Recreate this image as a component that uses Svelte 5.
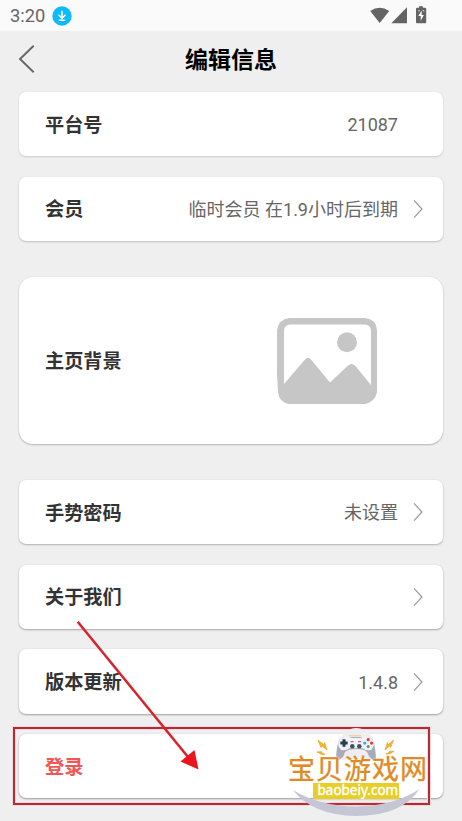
<script>
  const groups = [
    [
      { label: '平台号', value: '21087', depth: 0.14 },
      { label: '会员', value: '临时会员 在1.9小时后到期', arrow: true, depth: 0.19 },
    ],
    [{ label: '主页背景', picture: true, depth: 0.24 }],
    [
      { label: '手势密码', value: '未设置', arrow: true, depth: 0.26 },
      { label: '关于我们', arrow: true, depth: 0.3 },
      { label: '版本更新', value: '1.4.8', arrow: true, depth: 0.33 },
      { label: '登录', accent: true, depth: 0.36 },
    ],
  ];
</script>

<div class="screen">
  <div class="status">
    <span class="time">3:20</span>
    <svg class="download" width="20" height="20" viewBox="0 0 20 20">
      <circle cx="10" cy="10" r="9.7" fill="#0bbaff" />
      <path d="M10 4.700v7.500M6.600 8.800l3.400 3.600 3.400-3.600M6.700 14.200h6.600" fill="none" stroke="#fff" stroke-width="1.500" />
    </svg>
    <svg class="signals" width="58" height="20" viewBox="0 0 58 20" fill="#646464">
      <path d="M0.200 4.900Q9.800 -1.600 19.200 4.900L9.700 17Z" />
      <path d="M37 1.300V17.300H21.300Z" />
      <path d="M49 0.300h4v1.500h2.200q1 0 1 1V16.300q0 1-1 1h-8.200q-1 0-1-1V2.800q0-1 1-1h2z" />
      <path d="M51.700 4.500l-3.400 5.500h2.400v4.700l3.200-5.800h-2.200zM47.700 5.200l1.300-1h1l-.8 1zM54.700 5.200l-1.300-1h-1l.8 1z" fill="#fff" />
    </svg>
  </div>

  <header>
    <svg class="back" width="18" height="30" viewBox="0 0 18 30">
      <path d="M15.700 1.700L2 15L15.700 28.300" fill="none" stroke="#666" stroke-width="1.900" />
    </svg>
    <h1>编辑信息</h1>
  </header>

  <main>
    {#each groups as group}
      <section>
        {#each group as item}
          <div class="card" class:tall={item.picture} style="--depth: {item.depth}">
            <span class="label" class:accent={item.accent}>{item.label}</span>
            {#if item.value}<span class="value">{item.value}</span>{/if}
            {#if item.picture}
              <svg class="picture" width="100" height="86" viewBox="0 0 100 86">
                <path
                  fill="#c6c6c6"
                  fill-rule="evenodd"
                  d="M12 0H88Q99 1 100 12V74Q98 84 88 86H12Q2 84 1 74L0 56V12Q2 1 12 0ZM13 6.500Q7 7 7 13V66L28 41.500Q31 38 34 41.500L53 64.500L71 47.500Q74.500 44.500 78 47.500L94 67V13Q94 7 88 6.500Z"
                />
                <circle cx="70" cy="24.300" r="10" fill="#c6c6c6" />
              </svg>
            {/if}
            {#if item.arrow}
              <svg class="arrow" width="10" height="20" viewBox="0 0 10 20">
                <path d="M1 1.300L9 10L1 18.700" fill="none" stroke="#999" stroke-width="1.200" />
              </svg>
            {/if}
          </div>
        {/each}
      </section>
    {/each}
  </main>

  <svg class="marks" width="462" height="221" viewBox="0 600 462 221">
    <rect x="14" y="728" width="415" height="76" fill="none" stroke="#f5d9dc" stroke-width="4" />
    <rect x="14" y="728" width="415" height="76" fill="none" stroke="#b42b34" stroke-width="2" />
    <path d="M77.700 621.800L188 757" stroke="#d9212a" stroke-width="2.500" />
    <path d="M198.500 769.500L180.500 761.500L194.500 750Z" fill="#ec151c" />
  </svg>

  <div class="watermark">
    <svg width="150" height="101" viewBox="280 720 150 101">
      <path d="M342 736Q348 728 356 728Q365 728 371 736V760H342Z" fill="#eeeef0" />
      <path d="M293 790Q319 806 356 806.500Q394 806 419.500 789Q402 816 356 816Q312 815 293 790Z" fill="#c5c6d4" />
      <path d="M349 735.800h12" stroke="#f0c98a" stroke-width="1" />
      <path d="M339 740Q336 749 336 761Q343 760 345 752Q348 749 356 749Q365 749 367 752Q370 760 376 761Q376 749 373 740Q371 737 366 737H346Q341 737 339 740Z" fill="#a7aab8" />
      <path d="M340 739Q345 735 352 738H360Q367 735 372 739Q376 745 371 750Q366 751 362 748H350Q346 751 341 750Q336 745 340 739Z" fill="#f3f3f7" />
      <path d="M344 739.300v7.400M340.300 743h7.400" stroke="#293d50" stroke-width="3" />
      <circle cx="352.300" cy="746.200" r="2.300" fill="#405365" />
      <circle cx="359.300" cy="746.200" r="2.300" fill="#405365" />
      <path d="M350.500 741.700h3M358 741.700h3" stroke="#db5868" stroke-width="1.200" />
      <circle cx="368.200" cy="739.700" r="1.600" fill="#e73b46" />
      <circle cx="368.200" cy="746.500" r="1.600" fill="#47a85b" />
      <circle cx="364.800" cy="743.100" r="1.600" fill="#31afe2" />
      <circle cx="371.600" cy="743.100" r="1.600" fill="#e73b46" />
      <path d="M318 740l6 5 .5-2.500L327 750l-5.500-4.500-.5 2zM317 752l4.500-.3 .5 1.300 3 1.500-4.500-.3-.5-1zM393.500 740l-5.500 5-.5-2.500L385 750l5-4.500 .5 2zM394 751.500l-4.500-.3-.5 1.300-3 1.500 4.500-.3 .5-1z" fill="#f1b928" stroke="#e9a428" stroke-width=".8" />
      <rect x="313" y="783" width="86" height="16" fill="#e8ce27" />
    </svg>
    <span class="brand">宝贝游戏网</span>
    <span class="domain">baobeiy.com</span>
  </div>
</div>

<style>
  :global(body) {
    margin: 0;
  }
  .screen {
    position: relative;
    width: 462px;
    height: 821px;
    overflow: hidden;
    background: #efefef;
    font-family: Roboto, 'Noto Sans CJK SC', sans-serif;
  }
  .status {
    display: flex;
    align-items: center;
    height: 31px;
    padding: 0 34px 0 10px;
    box-sizing: border-box;
    background: #fafafa;
  }
  .time {
    width: 35px;
    font-size: 18.300px;
    line-height: 31px;
    color: #666;
    white-space: nowrap;
  }
  .download {
    margin-left: 7px;
  }
  .signals {
    margin-left: auto;
    margin-top: 1px;
  }
  header {
    display: grid;
    grid-template-columns: 1fr auto 1fr;
    align-items: center;
    height: 61px;
    padding-bottom: 5px;
    box-sizing: border-box;
  }
  .back {
    margin-left: 18px;
  }
  h1 {
    margin: 0;
    padding-top: 3px;
    font-size: 23px;
    line-height: 32px;
    font-weight: 700;
    color: #000;
  }
  main {
    display: flex;
    flex-direction: column;
    gap: 36px;
    padding: 0 19px;
  }
  section {
    display: flex;
    flex-direction: column;
    gap: 20.400px;
  }
  .card {
    display: flex;
    align-items: center;
    height: 64.300px;
    padding: 0 20px 0 26px;
    box-sizing: border-box;
    border-radius: 7px;
    background: #fff;
    box-shadow:
      0 1px 2px rgba(0, 0, 0, var(--depth)),
      0 0 2px rgba(0, 0, 0, 0.06);
  }
  .tall {
    height: 167px;
    border-radius: 14px;
  }
  .label {
    padding-top: 3px;
    font-size: 19.200px;
    line-height: 28px;
    font-weight: 700;
    color: #333;
  }
  .accent {
    color: #f05656;
  }
  .value {
    margin-left: auto;
    margin-right: 25px;
    padding-top: 2px;
    font-size: 18px;
    line-height: 28px;
    color: #666;
    white-space: nowrap;
  }
  .value:has(+ .arrow) {
    margin-right: 15px;
  }
  .arrow {
    margin-left: auto;
  }
  .value + .arrow {
    margin-left: 0;
  }
  .picture {
    margin-left: auto;
    margin-right: 46px;
    padding-top: 2px;
  }
  .marks {
    position: absolute;
    left: 0;
    top: 600px;
  }
  .watermark {
    position: absolute;
    left: 280px;
    top: 720px;
    width: 150px;
    height: 101px;
  }
  .brand,
  .domain {
    position: absolute;
    white-space: nowrap;
  }
  .brand {
    left: 8px;
    top: 32px;
    font-size: 27px;
    line-height: 36px;
    letter-spacing: 1px;
    color: #e08a22;
    -webkit-text-stroke: 0.300px #e08a22;
    text-shadow:
      0 0 2px #fff,
      0 0 2px #fff;
  }
  .domain {
    left: 37.500px;
    top: 62px;
    font-family: 'Noto Sans', sans-serif;
    font-size: 13.500px;
    line-height: 16px;
    color: #fff;
    -webkit-text-stroke: 0.400px #fff;
  }
</style>
